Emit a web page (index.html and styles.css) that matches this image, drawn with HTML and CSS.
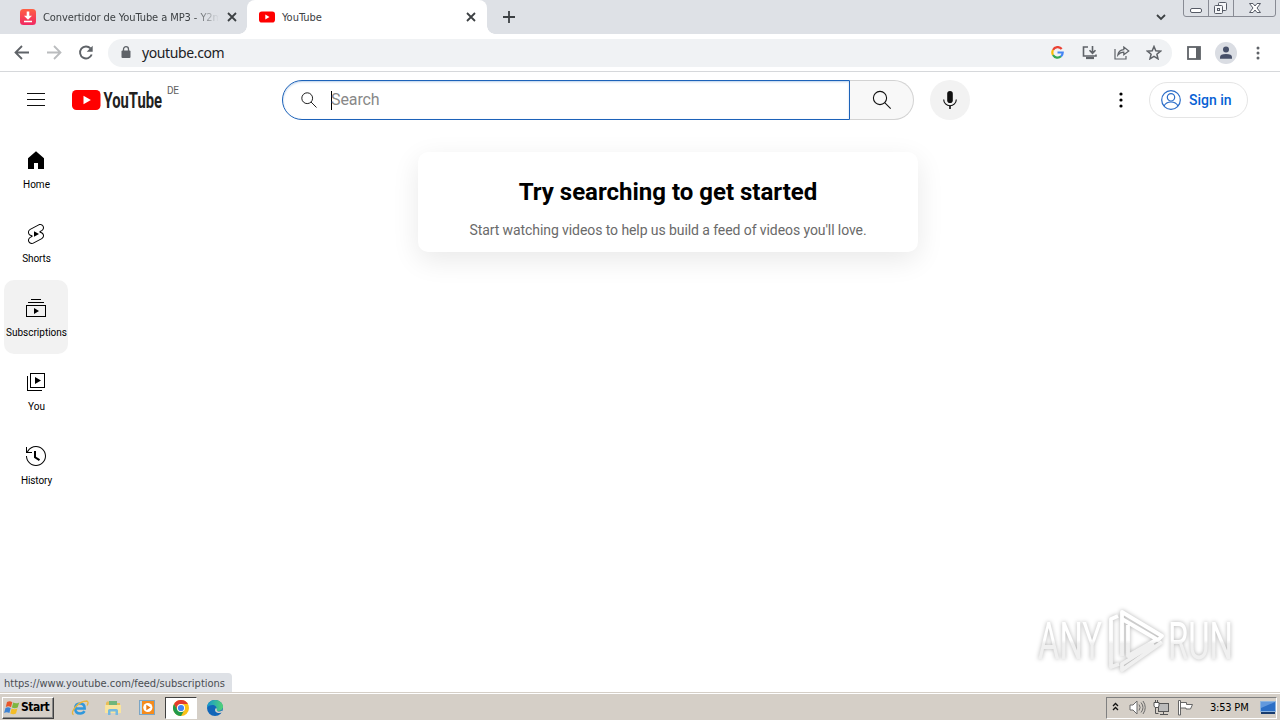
FILE: index.html
```html
<!DOCTYPE html>
<html lang="en">
<head>
<meta charset="utf-8">
<title>YouTube</title>
<link rel="stylesheet" href="styles.css">
</head>
<body>
<div class="screen">
  <header class="tabstrip">
    <div class="tab tab-idle">
      <svg class="fav" width="16" height="16" viewBox="0 0 16 16"><defs><linearGradient id="dl" x1="0" y1="0" x2="0" y2="1"><stop offset="0" stop-color="#ff6044"/><stop offset="1" stop-color="#f02862"/></linearGradient></defs><rect width="16" height="16" rx="3.5" fill="url(#dl)"/><path d="M6.700 2.500h2.600v4.200h2.700L8 10.800 4 6.700h2.700zM4 11.700h8v1.600H4z" fill="#fff"/></svg>
      <span class="tab-title long">Convertidor de YouTube a MP3 - Y2m</span>
      <svg class="close" width="10" height="10" viewBox="0 0 10 10"><path d="M1 1l8 8M9 1l-8 8" stroke="#3c4043" stroke-width="1.800"/></svg>
    </div>
    <div class="tab tab-active">
      <svg class="fav" width="16" height="16" viewBox="0 0 16 16"><rect y="2.500" width="16" height="11" rx="2.800" fill="#f00"/><path d="M6.300 5.600v4.800L10.500 8z" fill="#fff"/></svg>
      <span class="tab-title">YouTube</span>
      <svg class="close" width="10" height="10" viewBox="0 0 10 10"><path d="M1 1l8 8M9 1l-8 8" stroke="#3c4043" stroke-width="1.800"/></svg>
    </div>
    <svg class="newtab" width="12" height="12" viewBox="0 0 12 12"><path d="M6 0v12M0 6h12" stroke="#3c4043" stroke-width="1.800"/></svg>
    <svg class="chev" width="10" height="7" viewBox="0 0 10 7"><path d="M1 1l4 4 4-4" fill="none" stroke="#3c4043" stroke-width="1.800"/></svg>
    <svg class="winbtns" width="94" height="18" viewBox="0 0 94 18"><path d="M.5 0v14q0 2.500 2.500 2.500h87q2.500 0 2.500-2.500V0M25.500 0v16.500M50.500 0v16.500" fill="none" stroke="#888b94"/><rect x="7.500" y="8.500" width="11" height="4" rx="1.500" fill="#fff" stroke="#565b66"/><g fill="#f5f6f8" stroke="#565b66"><rect x="35.500" y="2.500" width="8" height="8" rx="1"/><rect x="31.500" y="5.500" width="8" height="8" rx="1"/><rect x="34.500" y="8.500" width="2" height="2"/></g><path d="M66.500 3.500h3.500l2 2.500 2-2.500h3.500l-3.500 4.500 3.500 4.500H74l-2-2.500-2 2.500h-3.500L70 8z" fill="#fff" stroke="#565b66"/></svg>
  </header>

  <div class="toolbar">
    <svg class="nav back" width="16" height="16" viewBox="0 0 16 16"><path d="M15 7.500H2M8 1L1.500 7.500 8 14" fill="none" stroke="#5f6368" stroke-width="1.800"/></svg>
    <svg class="nav fwd" width="16" height="16" viewBox="0 0 16 16"><path d="M1 7.500h13M8 1l6.500 6.500L8 14" fill="none" stroke="#babcbe" stroke-width="1.800"/></svg>
    <svg class="nav reload" width="16" height="16" viewBox="0 0 16 16"><path d="M13.700 9.500A6 6 0 1 1 12.500 3.400" fill="none" stroke="#5f6368" stroke-width="1.900"/><path d="M14.700.7v6h-6z" fill="#5f6368"/></svg>
    <div class="omnibox">
      <svg class="lock" width="10" height="13" viewBox="0 0 10 13"><rect x=".5" y="4.500" width="9" height="7.500" rx="1" fill="#5f6368"/><path d="M2.500 5V3.200a2.500 2.500 0 0 1 5 0V5" fill="none" stroke="#5f6368" stroke-width="1.300"/></svg>
      <span class="url">youtube.com</span>
      <svg class="g" width="13" height="13" viewBox="0 0 13 13" fill="none" stroke-width="2.200"><path d="M10.700 3A5.200 5.200 0 0 0 2 4" stroke="#ea4335"/><path d="M2 4a5.200 5.200 0 0 0 0 5" stroke="#fbbc05"/><path d="M2 9a5.200 5.200 0 0 0 8 1.300" stroke="#34a853"/><path d="M6.500 6.500h5.200a5 5 0 0 1-1.700 3.800" stroke="#4285f4"/></svg>
      <svg class="inst" width="16" height="14" viewBox="0 0 16 14" fill="none" stroke="#5f6368" stroke-width="1.600"><path d="M6 1H1.500v9H14V8.500M10.500 0v7M7.500 4.300l3 3 3-3"/><path d="M4 12h8" stroke-width="2.200"/></svg>
      <svg class="share" width="16" height="14" viewBox="0 0 16 14" fill="none" stroke="#5f6368" stroke-width="1.200"><path d="M1 3v10h11v-3"/><path d="M3.800 9.200Q4.500 4.200 9.800 3.700V1L14.800 5 9.800 8.700V6.200Q6.200 6.200 3.800 9.200z"/></svg>
      <svg class="star" width="16" height="15" viewBox="0 0 16 15"><path d="M8 1.500l1.800 4.300 4.700.4-3.600 3 1.100 4.600L8 11.300l-4 2.500 1.100-4.600-3.600-3 4.700-.4z" fill="none" stroke="#5f6368" stroke-width="1.500"/></svg>
    </div>
    <svg class="panel" width="14" height="14" viewBox="0 0 14 14"><rect x="1" y="1" width="12" height="12" fill="#fff" stroke="#5f6368" stroke-width="1.800"/><path d="M9 1h4v12H9z" fill="#5f6368"/></svg>
    <svg class="avatar" width="22" height="22" viewBox="0 0 22 22"><circle cx="11" cy="11" r="11" fill="#dadde3"/><circle cx="11" cy="7.500" r="3" fill="#475069"/><path d="M5 16.700v-1.500Q5 12 11 12t6 3.200v1.500z" fill="#475069"/></svg>
    <svg class="kebab" width="4" height="14" viewBox="0 0 4 14" fill="#5f6368"><circle cx="2" cy="2" r="1.500"/><circle cx="2" cy="7" r="1.500"/><circle cx="2" cy="12" r="1.500"/></svg>
  </div>

  <div class="page">
    <div class="masthead">
      <svg class="burger" width="18" height="13" viewBox="0 0 18 13"><path d="M0 .5h18M0 6.500h18M0 12.500h18" stroke="#0f0f0f"/></svg>
      <svg class="play" width="29" height="20" viewBox="0 0 29 20"><rect width="28.500" height="20" rx="4.500" fill="#f00"/><path d="M11.500 5.700v8.600l7.400-4.300z" fill="#fff"/></svg>
      <svg class="wordmark" width="61" height="30" viewBox="0 0 61 30"><text x="0.500" y="23" textLength="58.500" lengthAdjust="spacingAndGlyphs">YouTube</text></svg>
      <span class="region">DE</span>
      <div class="search">
        <div class="field">
          <svg width="16" height="16" viewBox="0 0 16 16" fill="none" stroke="#222"><circle cx="6.200" cy="6.200" r="5.400"/><path d="M10 10l5.500 5.500"/></svg>
          <i class="caret"></i><span class="ph">Search</span>
        </div>
        <div class="go"><svg width="20" height="20" viewBox="0 0 20 20" fill="none" stroke="#111" stroke-width="1.100"><circle cx="8" cy="8" r="6.600"/><path d="M12.700 12.700l6 6"/></svg></div>
        <div class="mic"><svg width="14" height="18" viewBox="0 0 14 18"><rect x="4.200" y="0" width="5.600" height="12" rx="2.800" fill="#0f0f0f"/><path d="M.7 8.500a6.300 6.300 0 0 0 12.600 0" fill="none" stroke="#0f0f0f" stroke-width="1.100"/><path d="M7 14.800V18" stroke="#0f0f0f" stroke-width="1.600"/></svg></div>
      </div>
      <svg class="more" width="4" height="16" viewBox="0 0 4 16"><circle cx="2" cy="2" r="1.600"/><circle cx="2" cy="8" r="1.600"/><circle cx="2" cy="14" r="1.600"/></svg>
      <div class="signin"><svg width="20" height="20" viewBox="0 0 20 20" fill="none" stroke="#2a6cc8" stroke-width="1.200"><circle cx="10" cy="10" r="9.300"/><circle cx="10" cy="7.300" r="3.700"/><path d="M3 16c1.500-3 4-4 7-4s5.500 1 7 4"/></svg><span>Sign in</span></div>
    </div>

    <div class="content">
      <nav class="guide">
        <div class="item"><svg width="24" height="24" viewBox="0 0 24 24"><path d="M4 10.200l8-6.900 8 6.900V21h-6v-6h-4v6H4z"/></svg><span class="l-home">Home</span></div>
        <div class="item"><svg width="24" height="24" viewBox="0 0 24 24"><path d="M10 14.650v-5.300L15 12l-5 2.650zm7.770-4.330l-1.200-.5L18 9.060c1.840-.96 2.530-3.230 1.560-5.060s-3.240-2.530-5.070-1.560L6 6.940c-1.290.68-2.070 2.040-2 3.490.07 1.420.93 2.670 2.220 3.250.03.010 1.200.5 1.200.5L6 14.930c-1.830.97-2.530 3.240-1.560 5.070.97 1.830 3.240 2.530 5.070 1.560l8.500-4.500c1.290-.68 2.060-2.040 1.990-3.490-.07-1.420-.94-2.680-2.230-3.250zm-.23 5.860l-8.500 4.500c-1.340.71-3.010.200-3.720-1.140-.71-1.340-.200-3.010 1.140-3.720l2.040-1.080v-1.210l-.690-.280-1.110-.460c-.990-.410-1.650-1.350-1.700-2.410-.050-1.060.520-2.060 1.460-2.560l8.500-4.500c1.340-.710 3.010-.200 3.720 1.140.710 1.340.200 3.010-1.140 3.720L15.500 9.260v1.210l1.800.740c.990.410 1.650 1.350 1.700 2.410.050 1.060-.520 2.060-1.460 2.560z"/></svg><span class="l-shorts">Shorts</span></div>
        <div class="item active"><svg width="24" height="24" viewBox="0 0 24 24"><path d="M10 18v-6l5 3-5 3zm7-15H7v1h10V3zm3 3H4v1h16V6zm2 3H2v12h20V9zM3 10h18v10H3V10z"/></svg><span class="l-subs">Subscriptions</span></div>
        <div class="item"><svg width="24" height="24" viewBox="0 0 24 24"><path d="M11 7l6 3.500-6 3.500V7zm7 13H4V6H3v15h15v-1zm3-2H6V3h15v15zM7 17h13V4H7v13z"/></svg><span class="l-you">You</span></div>
        <div class="item"><svg width="24" height="24" viewBox="0 0 24 24"><path d="M14.970 16.950L10 13.870V7h2v5.760l4.030 2.490-1.060 1.700zM22 12c0 5.510-4.490 10-10 10S2 17.510 2 12h1c0 4.960 4.040 9 9 9s9-4.040 9-9-4.040-9-9-9C8.810 3 5.920 4.640 4.280 7.380L4.100 7.670V8H8v1H2V3h1v4.650l.430-.790C5.230 3.860 8.510 2 12 2c5.510 0 10 4.490 10 10z"/></svg><span class="l-hist">History</span></div>
      </nav>
      <main class="feed">
        <section class="card">
          <h1>Try searching to get started</h1>
          <p>Start watching videos to help us build a feed of videos you'll love.</p>
        </section>
      </main>
    </div>

    <div class="status">https://www.youtube.com/feed/subscriptions</div>
    <svg class="mark" width="220" height="80" viewBox="0 0 220 80">
      <defs><linearGradient id="ink" gradientUnits="userSpaceOnUse" x1="0" y1="10" x2="0" y2="70"><stop offset=".5" stop-color="#fff"/><stop offset=".56" stop-color="#f0f0f0"/></linearGradient></defs>
      <g class="mark-ink">
        <text x="8" y="59" textLength="64" lengthAdjust="spacingAndGlyphs" fill="url(#ink)">ANY</text>
        <text x="138" y="59" textLength="65" lengthAdjust="spacingAndGlyphs" fill="url(#ink)">RUN</text>
        <g fill="none" stroke="url(#ink)" stroke-width="3.800" stroke-linejoin="round"><path d="M88 16L81 19V67L89 64M92 56V12L132 36L128 40L92 19M98 25V56L126 40M132 42L92 70V64L124 44"/></g>
      </g>
    </svg>
  </div>

  <footer class="taskbar">
    <div class="start"><svg width="16" height="15" viewBox="0 0 16 15"><path d="M3 2q3-1.600 5.300.2L7 7.200Q4.500 5.500 1.800 7z" fill="#e8562a"/><path d="M9.200 2.600q3 1.500 6-.2L13.700 7.600q-3 1.500-5.800 0z" fill="#7eb640"/><path d="M1.500 8q2.700-1.500 5.200.2L5.400 13Q2.700 11.500.1 13z" fill="#3d83d4"/><path d="M7.600 8.600q2.800 1.500 5.800 0L12 13.600q-3 1.300-5.700-.2z" fill="#f4bd27"/></svg><b>Start</b></div>
    <svg class="t-ie" width="18" height="18" viewBox="0 0 18 18" fill="none"><path d="M4.500 9.500h9.200q0-5-4.700-5t-4.800 5q0 5 5 5 3 0 4.300-2.400" stroke="#3198dc" stroke-width="2.500"/><path d="M2.500 15.800Q-.5 14 4.500 8T16 2q2 1 .2 4.500" stroke="#e9b53b" stroke-width="1.300"/></svg>
    <svg class="t-folder" width="18" height="18" viewBox="0 0 18 18"><path d="M2 4l1-1.500h5L9 4h7v9H2z" fill="#e8bd58"/><path d="M5 2h8v5H5z" fill="#6fb57b"/><path d="M1 6h16v8H1z" fill="#f9e49d"/><path d="M4 16v-4.500q0-1.500 1.500-1.500h7q1.500 0 1.500 1.500V16h-2.500v-3.500h-5V16z" fill="#75b9df"/></svg>
    <svg class="t-media" width="17" height="17" viewBox="0 0 17 17"><rect x=".5" y="1.500" width="15" height="14" fill="#b9d8ee" stroke="#7ba5c5"/><rect x="3" y="2" width="12" height="13" fill="#f58b1c"/><circle cx="8.800" cy="8.500" r="4.600" fill="#fff"/><path d="M7.300 5.700v5.600l4.300-2.800z" fill="#e97912"/></svg>
    <div class="t-active"><svg width="16" height="16" viewBox="0 0 16 16"><circle cx="8" cy="8" r="8" fill="#fbc116"/><path d="M1.070 4A8 8 0 0 1 14.930 4H8a4 4 0 0 0-3.460 6z" fill="#e33b2e"/><path d="M1.070 4A8 8 0 0 0 8 16l3.460-6a4 4 0 0 1-6.920 0z" fill="#229a4b"/><circle cx="8" cy="8" r="4" fill="#fff"/><circle cx="8" cy="8" r="3.100" fill="#4285f4"/></svg></div>
    <svg class="t-edge" width="16" height="16" viewBox="0 0 16 16"><defs><linearGradient id="ed"><stop offset="0" stop-color="#1596cf"/><stop offset="1" stop-color="#52d375"/></linearGradient></defs><circle cx="8" cy="8" r="8" fill="#1266b8"/><path d="M0 8C0 3 3.500 0 8 0s8 3.200 8 6.500S13.500 11 11 11s-2.300-1-1.700-2C10.200 7 8 5 5.500 5S.5 6 0 8z" fill="url(#ed)"/><path d="M9.300 8.500Q8 11 10.500 12q2.500.8 5-.7" fill="none" stroke="#d6d2ca" stroke-width="1.600"/></svg>
    <div class="tray">
      <svg class="up" width="7" height="9" viewBox="0 0 7 9" fill="none" stroke="#111" stroke-width="1.300"><path d="M1 4l2.500-2.500L6 4M1 8l2.500-2.500L6 8"/></svg>
      <svg class="vol" width="17" height="15" viewBox="0 0 17 15" fill="none" stroke="#6b6b6b"><path d="M1 5h3l4-4v13l-4-4H1z" fill="#fff"/><path d="M10 4.500q2.300 3 0 6M12 2.500q4 5 0 10M14 1q4.500 6.500 0 13" /></svg>
      <svg class="net" width="17" height="16" viewBox="0 0 17 16" fill="none" stroke="#555"><rect x="5.500" y="3.500" width="10" height="8" fill="#bbb"/><path d="M10.500 12v2M7 14.500h8M2.500 7.500v6h3"/><path d="M1 2.500h5V6L5 7.500H2L1 6zM2.500 0v2.500M4.500 0v2.500" fill="#fff"/></svg>
      <svg class="flag" width="17" height="16" viewBox="0 0 17 16"><path d="M1.500.5h2V15h-2zM3.500 2.500h6v2h6l-2 4.500H9V8H3.500z" fill="#fff" stroke="#666"/></svg>
      <span class="time">3:53 PM</span>
      <svg class="desk" width="16" height="14" viewBox="0 0 16 14"><path d="M.5.500h15v10H.5z" fill="#2c6fc6" stroke="#8bb4df"/><path d="M1 1h14L1 7z" fill="#6299dd"/><path d="M1 11h14v2H1z" fill="#183c6e"/></svg>
    </div>
  </footer>
</div>
</body>
</html>
```
FILE: styles.css
```css
* { box-sizing: border-box; }
body { margin: 0; background: #fff; font-family: Roboto, sans-serif; color: #0f0f0f; }
svg { display: block; flex: none; }
.screen { width: 1280px; height: 720px; display: flex; flex-direction: column; overflow: hidden; }

.tabstrip { height: 34px; flex: none; background: #dee1e6; display: flex; }
.tab { display: flex; align-items: center; height: 34px; color: #3c4043; }
.tab-idle { width: 247px; padding-left: 20px; }
.tab-active { width: 240px; padding-left: 12px; background: #fff; border-radius: 8px 8px 0 0; position: relative; }
.tab-active::before, .tab-active::after { content: ""; position: absolute; bottom: 0; width: 8px; height: 8px; }
.tab-active::before { left: -8px; background: radial-gradient(circle at 0 0, transparent 7.5px, #fff 8px); }
.tab-active::after { right: -8px; background: radial-gradient(circle at 100% 0, transparent 7.5px, #fff 8px); }
.tab-title { margin-left: 7px; width: 178px; font: 11px "DejaVu Sans Condensed", sans-serif; white-space: nowrap; }
.tab-title.long { width: 176px; letter-spacing: -0.08px; -webkit-mask-image: linear-gradient(90deg, #000 150px, transparent 176px); mask-image: linear-gradient(90deg, #000 150px, transparent 176px); }
.close { margin-left: 8px; }
.tab-active .close { margin-left: 6px; }
.newtab { margin: 11px 0 0 16px; }
.chev { margin: 14px 0 0 641px; }
.winbtns { margin-left: 17px; }

.toolbar { height: 38px; flex: none; display: flex; align-items: center; border-bottom: 1px solid #d6d8db; }
.back { margin-left: 14px; }
.fwd, .reload { margin-left: 16px; }
.omnibox { margin-left: 14px; width: 1064px; height: 28px; border-radius: 14px; background: #f0f2f4; display: flex; align-items: center; padding-left: 13px; }
.url { margin-left: 11px; width: 909px; font: 14px "Noto Sans", sans-serif; color: #202124; letter-spacing: -0.38px; }
.inst { margin-left: 18px; }
.share { margin-left: 16px; }
.star { margin-left: 16px; }
.panel { margin-left: 15px; }
.avatar { margin-left: 14px; }
.kebab { margin-left: 19px; }

.page { flex: 1; position: relative; }
.masthead { height: 56px; display: flex; align-items: center; }
.burger { margin: 0 0 1px 27px; }
.play { margin-left: 27px; }
.wordmark { margin-left: 2px; }
.wordmark text { font: 700 22px Roboto, sans-serif; fill: #212121; }
.region { margin: 0 0 18px 3px; width: 13px; font-size: 10px; color: #606060; line-height: 12px; letter-spacing: -0.3px; }
.search { display: flex; margin-left: 102px; }
.field { width: 568px; height: 40px; border: 1px solid #1c62b9; border-radius: 20px 0 0 20px; display: flex; align-items: center; padding-left: 18px; box-shadow: inset 0 1px 2px rgba(28, 98, 185, .3); }
.caret { width: 1px; height: 19px; background: #000; margin-left: 14px; }
.ph { margin: 0 0 2px -1px; font-size: 16px; color: #888; letter-spacing: -0.1px; }
.go { width: 64px; height: 40px; border: 1px solid #d3d3d3; border-left: 0; border-radius: 0 20px 20px 0; background: #f8f8f8; display: flex; align-items: center; justify-content: center; }
.mic { margin-left: 16px; width: 40px; height: 40px; border-radius: 50%; background: #f2f2f2; display: flex; align-items: center; justify-content: center; }
.more { margin-left: 149px; }
.signin { margin-left: 26px; width: 99px; height: 36px; border: 1px solid #e5e5e5; border-radius: 18px; display: flex; align-items: center; padding-left: 11px; gap: 8px; font-size: 14px; font-weight: 500; color: #065fd4; }

.content { display: flex; }
.guide { width: 72px; flex: none; padding: 4px 4px 0; }
.item { height: 74px; border-radius: 10px; display: flex; flex-direction: column; align-items: center; padding-top: 16px; color: #000; }
.item.active { background: #f2f2f2; }
.item span { margin: 6px 0 0 1px; font-size: 10px; line-height: 14px; white-space: nowrap; }
.l-hist, .l-shorts { letter-spacing: -0.1px; }
.feed { flex: 1; padding: 24px 0 0 346px; }
.card { width: 500px; height: 100px; border-radius: 10px; background: #fff; box-shadow: 0 8px 28px rgba(0, 0, 0, .09); text-align: center; padding-top: 24px; }
.card h1 { margin: 0; font-size: 24px; line-height: 32px; font-weight: 700; color: #000; white-space: nowrap; }
.card p { margin: 11px 0 0; font-size: 14px; line-height: 22px; color: #6a6a6a; white-space: nowrap; letter-spacing: -0.08px; }

.status { position: absolute; left: 0; bottom: 0; width: 232px; height: 19px; background: #dee1e6; border-top-right-radius: 4px; padding-left: 4px; font: 11px/21px "DejaVu Sans Condensed", sans-serif; color: #4a4d52; white-space: nowrap; }
.mark { position: absolute; left: 1030px; top: 528px; }
.mark-ink { filter: drop-shadow(0 0 2px rgba(0, 0, 0, .3)); }
.mark text { font: 400 52px Roboto, sans-serif; }

.taskbar { height: 28px; flex: none; background: #d5cfc7; border-top: 1px solid #d5cfc7; box-shadow: inset 0 1px #fff; display: flex; align-items: center; padding-top: 2px; }
.start { margin-left: 2px; width: 52px; height: 22px; border: 1px solid; border-color: #fff #404040 #404040 #fff; box-shadow: inset -1px -1px #888; display: flex; align-items: center; padding-left: 1px; font: 700 12px "DejaVu Sans Condensed", sans-serif; color: #000; }
.start b { margin: -2px 0 0 1px; letter-spacing: -0.5px; }
.t-ie { margin-left: 17px; }
.t-folder { margin-left: 15px; }
.t-media { margin-left: 17px; }
.t-active { margin-left: 9px; width: 32px; height: 22px; background: #fff; border: 1px solid; border-color: #404040 #fff #fff #404040; display: flex; align-items: center; justify-content: center; }
.t-edge { margin-left: 10px; }
.tray { margin-left: 883px; width: 171px; height: 22px; border: 1px solid; border-color: #808080 #fff #fff #808080; display: flex; align-items: center; padding-left: 5px; }
.up { margin-bottom: 3px; }
.vol { margin-left: 10px; }
.net { margin-left: 7px; }
.flag { margin-left: 7px; }
.time { margin: -1px 0 0 16px; width: 40px; font: 11px "DejaVu Sans Condensed", sans-serif; color: #000; white-space: nowrap; letter-spacing: -0.2px; }
.desk { margin-left: 11px; }
```
